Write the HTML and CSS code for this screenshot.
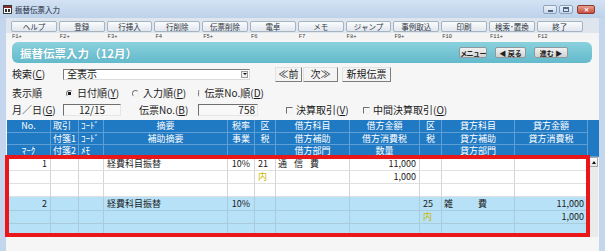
FILE: index.html
```html
<!DOCTYPE html>
<html lang="ja">
<head>
    <meta charset="UTF-8">
    <meta name="viewport" content="width=device-width, initial-scale=1.0">
    <title>振替伝票入力</title>
    <link rel="stylesheet" href="styles.css">
</head>
<body>
    <div class="window">
        <div class="titlebar">
            <svg class="app_icon" width="9" height="9" viewBox="0 0 9 9">
                <rect x="0.5" y="0.5" width="8" height="8" fill="#fff" stroke="#3a3a3a"/>
                <rect x="1" y="1" width="7" height="2" fill="#8a2b2b"/>
                <rect x="2" y="4" width="2" height="3" fill="#333"/>
                <rect x="5" y="4" width="2" height="3" fill="#333"/>
            </svg>
            <span class="title">振替伝票入力</span>
            <div class="caption_btns">
                <span class="cap min"><i></i></span>
                <span class="cap max"><i></i></span>
                <span class="cap close">✕</span>
            </div>
        </div>

        <div class="client">
            <div class="toolbar">
                <div class="tool"><button>ヘルプ</button><span>F1+</span></div>
                <div class="tool"><button>登録</button><span>F2+</span></div>
                <div class="tool"><button>行挿入</button><span>F3+</span></div>
                <div class="tool"><button>行削除</button><span>F4</span></div>
                <div class="tool"><button>伝票削除</button><span>F5+</span></div>
                <div class="tool"><button>電卓</button><span>F6</span></div>
                <div class="tool"><button>メモ</button><span>F7</span></div>
                <div class="tool"><button>ジャンプ</button><span>F8+</span></div>
                <div class="tool"><button>事例取込</button><span>F9+</span></div>
                <div class="tool"><button>印刷</button><span>F10</span></div>
                <div class="tool"><button>検索･置換</button><span>F11+</span></div>
                <div class="tool"><button>終了</button><span>F12</span></div>
            </div>

            <div class="band">
                <h1>振替伝票入力（12月）</h1>
                <div class="nav">
                    <button class="nav_menu">メニュー</button>
                    <button class="nav_back">◀ 戻る</button>
                    <button class="nav_fwd">進む ▶</button>
                </div>
            </div>

            <div class="form">
                <div class="row row_search">
                    <span class="lbl">検索(<u>C</u>)</span>
                    <div class="select">全表示<span class="arrow"></span></div>
                    <button class="flat prev">≪前</button>
                    <button class="flat next">次≫</button>
                    <button class="flat new">新規伝票</button>
                </div>
                <div class="row row_order">
                    <span class="lbl">表示順</span>
                    <span class="radio"><span class="dot on"></span><span>日付順(<u>Y</u>)</span></span>
                    <span class="radio"><span class="dot"></span><span>入力順(<u>P</u>)</span></span>
                    <span class="radio"><span class="dot"></span><span>伝票No.順(<u>D</u>)</span></span>
                </div>
                <div class="row row_date">
                    <span class="lbl">月／日(<u>G</u>)</span>
                    <div class="field date">12/15</div>
                    <span class="lbl_no">伝票No.(<u>B</u>)</span>
                    <div class="field num">758</div>
                    <span class="chk chk1"><span class="box"></span><span>決算取引(<u>V</u>)</span></span>
                    <span class="chk"><span class="box"></span><span>中間決算取引(<u>O</u>)</span></span>
                </div>
            </div>

            <div class="grid">
                <div class="head">
                    <div>No.</div><div class="l">取引</div><div class="l">ｺｰﾄﾞ</div><div>摘要</div><div>税率</div><div>区</div><div>借方科目</div><div>借方金額</div><div>区</div><div>貸方科目</div><div>貸方金額</div><div class="corner"></div>
                    <div></div><div class="l">付箋1</div><div class="l">ｺｰﾄﾞ</div><div>補助摘要</div><div>事業</div><div>税</div><div>借方補助</div><div>借方消費税</div><div>税</div><div>貸方補助</div><div>貸方消費税</div>
                    <div>ﾏｰｸ</div><div class="l">付箋2</div><div class="l">ﾒﾓ</div><div></div><div></div><div></div><div>借方部門</div><div>数量</div><div></div><div>貸方部門</div><div></div>
                </div>

                <div class="body">
                    <div class="rows">
                        <div class="rec first">
                            <div class="r">1</div><div></div><div></div><div class="text">経費科目振替</div><div class="c">10%</div><div class="kb">21</div><div class="acct a1">通信費</div><div class="r">11,000</div><div></div><div></div><div></div>
                        </div>
                        <div class="rec">
                            <div></div><div></div><div></div><div></div><div></div><div class="kb tax">内</div><div></div><div class="r">1,000</div><div></div><div></div><div></div>
                        </div>
                        <div class="rec">
                            <div></div><div></div><div></div><div></div><div></div><div></div><div></div><div></div><div></div><div></div><div></div>
                        </div>
                        <div class="rec blue first">
                            <div class="r">2</div><div></div><div></div><div class="text">経費科目振替</div><div class="c">10%</div><div></div><div></div><div></div><div class="kb">25</div><div class="acct a2">雑費</div><div class="r">11,000</div>
                        </div>
                        <div class="rec blue">
                            <div></div><div></div><div></div><div></div><div></div><div></div><div></div><div></div><div class="kb tax">内</div><div></div><div class="r">1,000</div>
                        </div>
                        <div class="rec blue">
                            <div></div><div></div><div></div><div></div><div></div><div></div><div></div><div></div><div></div><div></div><div></div>
                        </div>
                    </div>
                    <div class="scroll">
                        <div class="up"><span></span></div>
                    </div>
                </div>
            </div>
        </div>
    </div>

    <div class="mark"></div>
</body>
</html>
```

FILE: styles.css
```css
*{
    margin: 0;
    padding: 0;
    box-sizing: border-box;
}

body{
    width: 605px;
    height: 251px;
    overflow: hidden;
    position: relative;
    background-color: #c3d6ed;
    font-family: "Noto Sans CJK JP", "Noto Sans", sans-serif;
    color: #1b1b1b;
}

button{
    font-family: inherit;
    color: inherit;
    padding: 0;
    cursor: pointer;
}

.window{
    height: 251px;
    display: flex;
    flex-direction: column;
}

/* title bar */
.titlebar{
    height: 18px;
    display: flex;
    align-items: center;
    padding-left: 3px;
    background: linear-gradient(#d3e2f4, #bdd2ea);
}

.title{
    font-size: 7.5px;
    line-height: 9px;
    margin-left: 3px;
    color: #1d2b3c;
}

.caption_btns{
    margin-left: auto;
    margin-right: 10px;
    align-self: flex-start;
    margin-top: 5px;
    display: flex;
    gap: 2px;
}

.cap{
    width: 14px;
    height: 9px;
    border: 1px solid #8ca2bd;
    border-radius: 2px;
    background: linear-gradient(#edf3fb, #c8d7ea);
    display: flex;
    align-items: center;
    justify-content: center;
}

.min i{
    width: 5px;
    height: 2px;
    margin-top: 3px;
    background: #4d6682;
}

.max i{
    width: 6px;
    height: 5px;
    border: 1px solid #4d6682;
    border-top-width: 2px;
}

.close{
    width: 18px;
    margin-left: 2px;
    border-color: #8d3a32;
    background: linear-gradient(#e9a08f, #c84c3d);
    color: #fff;
    font-size: 6px;
    line-height: 6px;
    font-weight: bold;
}

/* client */
.client{
    flex: 1;
    margin: 0 6px;
    background-color: #f6f6f6;
    display: flex;
    flex-direction: column;
}

.toolbar{
    height: 22px;
    padding: 3px 0 0 5px;
    display: flex;
    gap: 2px;
    background: linear-gradient(#dee5ed 0, #dee5ed 15px, #f4f4f4 15px);
}

.tool{
    width: 45.8px;
    display: flex;
    flex-direction: column;
}

.tool button{
    height: 11px;
    font-size: 7.5px;
    line-height: 9px;
    color: #2c3440;
    background: linear-gradient(#fbfcfd, #e1e7ee);
    border: 1px solid #a6b3c2;
    border-radius: 2px;
}

.tool span{
    margin-top: 1px;
    padding-left: 1px;
    font-family: "Liberation Mono", monospace;
    font-size: 5.5px;
    line-height: 7px;
    color: #3c3c3c;
}

/* title band */
.band{
    height: 21px;
    margin: 2px 7px 0 6px;
    padding: 0 24px 0 8px;
    border-radius: 6px;
    display: flex;
    align-items: center;
    background: linear-gradient(#8ad1dd, #63bacb);
}

.band h1{
    font-size: 11.5px;
    line-height: 14px;
    font-weight: bold;
    color: #fff;
    text-shadow: 0 0 1px #4b9aab;
}

.nav{
    margin-left: auto;
    display: flex;
    gap: 8px;
}

.nav button{
    height: 11px;
    font-size: 7px;
    line-height: 8px;
    font-weight: bold;
    color: #222;
    white-space: nowrap;
    background: linear-gradient(#f2f2f2, #d2d2d2);
    border: 1px solid #8f9a9e;
    border-radius: 2px;
}

.nav_menu{ width: 28px; letter-spacing: -0.6px; }
.nav_back{ width: 31px; }
.nav_fwd{ width: 34px; }

/* search form */
.form{
    padding: 3px 0 0 6px;
    display: flex;
    flex-direction: column;
}

.row{
    display: flex;
    align-items: center;
    font-size: 10px;
    line-height: 12px;
}

.row_search{ height: 16px; }
.row_order{ height: 14px; margin-top: 4px; }
.row_date{ height: 14px; margin-top: 3px; }

.lbl{
    width: 51px;
}

.select{
    width: 187px;
    height: 11px;
    padding-left: 3px;
    display: flex;
    align-items: center;
    font-size: 10px;
    line-height: 10px;
    background-color: #fff;
    border: 1px solid;
    border-color: #7b7b7b #dcdcdc #dcdcdc #7b7b7b;
}

.arrow{
    margin-left: auto;
    margin-right: 1px;
    width: 7px;
    height: 7px;
    border: 1px solid #9a9a9a;
    background: #f0f0f0;
    display: flex;
    align-items: center;
    justify-content: center;
}

.arrow::before{
    content: "";
    border-left: 2px solid transparent;
    border-right: 2px solid transparent;
    border-top: 2px solid #111;
}

.flat{
    height: 15px;
    font-size: 10px;
    line-height: 12px;
    background-color: #f4f4f4;
    border: 1px solid;
    border-color: #e2e2e2 #7e7e7e #7e7e7e #e2e2e2;
}

.prev{ width: 27px; margin-left: 25px; }
.next{ width: 35px; margin-left: 1px; }
.new{ width: 49px; margin-left: 4px; }

.radio{
    width: 66px;
    display: flex;
    align-items: center;
    gap: 4px;
    white-space: nowrap;
}

.radio:nth-child(2){
    margin-left: 3px;
}

.dot{
    width: 7px;
    height: 7px;
    border-radius: 50%;
    border: 1px solid;
    border-color: #7a7a7a #f0f0f0 #f0f0f0 #7a7a7a;
}

.dot.on{
    background: radial-gradient(circle, #111 0 1.4px, transparent 1.8px);
}

.field{
    height: 12px;
    font-size: 10px;
    line-height: 10px;
    border: 1px solid;
    border-color: #6f6f6f #e6e6e6 #e6e6e6 #6f6f6f;
    background-color: #f8f8f8;
}

.date{
    width: 58px;
    text-align: center;
}

.num{
    width: 60px;
    text-align: right;
    padding-right: 2px;
}

.lbl_no{
    width: 59px;
    margin-left: 18px;
    white-space: nowrap;
}

.chk{
    display: flex;
    align-items: center;
    gap: 3px;
    white-space: nowrap;
}

.chk1{
    width: 77px;
    margin-left: 28px;
}

.box{
    width: 7px;
    height: 7px;
    border: 1px solid;
    border-color: #6f6f6f #f0f0f0 #f0f0f0 #6f6f6f;
}

/* journal grid */
.grid{
    margin: 3px 0 0 1px;
    font-size: 9px;
}

.head{
    display: grid;
    grid-template-columns: 44px 28px 25px 124px 27px 21px 74px 70px 22px 73px 73px 10px;
    grid-template-rows: 13px 12px 12px;
    background-color: #1f79c3;
    color: #fff;
}

.head div{
    display: flex;
    align-items: center;
    justify-content: center;
    line-height: 10px;
    white-space: nowrap;
    border-right: 1px solid #5e9fd6;
    border-bottom: 1px solid #5e9fd6;
}

.head .l{
    justify-content: flex-start;
    padding-left: 2px;
}

.head .corner{
    grid-row: span 3;
    border-right: none;
}

.body{
    display: flex;
    height: 80px;
}

.rows{
    width: 581px;
}

.rec{
    height: 13px;
    display: grid;
    grid-template-columns: 44px 28px 25px 124px 27px 21px 74px 70px 22px 73px 73px;
    background-color: #fff;
}

.rec.first{
    height: 14px;
}

.rec div{
    padding: 0 2px;
    line-height: 12px;
    white-space: nowrap;
    overflow: hidden;
    border-right: 1px solid #d6d6d6;
    border-bottom: 1px solid #e0e0e0;
}

.rec.blue{
    background-color: #b6e1f6;
}

.rec.blue div{
    border-color: #a9cbdc;
}

.rec.first div{
    line-height: 13px;
}

.rec .r{
    text-align: right;
    padding-right: 3px;
}

.rec .c{
    text-align: center;
}

.rec .text{
    padding-left: 3px;
}

.rec .kb{
    padding-left: 3px;
}

.tax{
    color: #c9b800;
}

.a1{
    padding-left: 4px;
    letter-spacing: 7px;
}

.a2{
    padding-left: 2px;
    letter-spacing: 25px;
}

.scroll{
    width: 10px;
    background-color: #ebebeb;
    border-left: 1px solid #d8d8d8;
}

.up{
    height: 10px;
    border: 1px solid #a9a9a9;
    background: linear-gradient(#ffffff, #e4e4e4);
    display: flex;
    align-items: center;
    justify-content: center;
}

.up span{
    border-left: 2px solid transparent;
    border-right: 2px solid transparent;
    border-bottom: 3px solid #111;
}

/* red highlight drawn over the rows */
.mark{
    position: absolute;
    left: 5px;
    top: 155px;
    width: 585px;
    height: 82px;
    border: 4px solid #e9161a;
}
```
